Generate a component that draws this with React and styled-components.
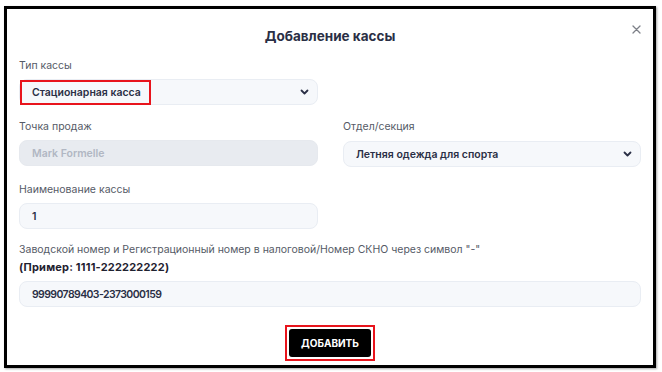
import React from 'react'
import styled, { createGlobalStyle } from 'styled-components'

const GlobalStyle = createGlobalStyle`
  html, body {
    margin: 0;
    padding: 0;
    background: #ffffff;
  }
  body {
    font-family: Inter, "Noto Sans", sans-serif;
  }
`

const Page = styled.div`
  width: 662px;
  height: 372px;
  padding: 6px 0 0 4px;
  box-sizing: border-box;
`

const Modal = styled.div`
  position: relative;
  width: 652px;
  height: 362px;
  box-sizing: border-box;
  border: 3px solid #000;
  box-shadow: 1px 1px 2px rgba(0, 0, 0, 0.35);
  background: #fff;
  padding: 0 12px;
  display: flex;
  flex-direction: column;
`

const Title = styled.h2`
  margin: 19px 0 0;
  height: 16px;
  line-height: 16px;
  text-align: center;
  font-size: 13.5px;
  font-weight: 700;
  color: #2a2f45;
`

const CloseButton = styled.button`
  position: absolute;
  top: 13px;
  right: 10px;
  width: 14px;
  height: 14px;
  padding: 0;
  border: none;
  background: transparent;
  display: flex;
  align-items: center;
  justify-content: center;
  cursor: pointer;
`

const Row = styled.div`
  display: grid;
  grid-template-columns: 299px 298px;
  column-gap: 25px;
  margin-top: ${p => p.$gap}px;
`

const Field = styled.div`
  display: flex;
  flex-direction: column;
  ${p => p.$wide && 'grid-column: 1 / span 2;'}
`

const Label = styled.label`
  font-size: 10.5px;
  line-height: 14px;
  padding-top: 1px;
  color: #555a66;
  margin-bottom: ${p => (p.$tight ? 3 : 6)}px;
  white-space: nowrap;
`

const Hint = styled.div`
  font-size: 11px;
  font-weight: 700;
  line-height: 14px;
  letter-spacing: 0.2px;
  color: #1f2230;
  margin-bottom: 7px;
`

const Control = styled.div`
  height: 26px;
  box-sizing: border-box;
  border: 1px solid ${p => (p.$disabled ? '#e6e9ee' : '#e9edf3')};
  background: ${p => (p.$disabled ? '#e8ebf0' : '#f6f8fb')};
  border-radius: 8px;
  display: flex;
  align-items: center;
  padding: 0 12px;
  font-size: 10.5px;
  font-weight: 600;
  white-space: nowrap;
  letter-spacing: ${p => (p.$numeric ? '-0.6px' : '0')};
  color: ${p => (p.$disabled ? '#b1b7c3' : '#2a2f45')};
  margin-top: ${p => p.$shift || 0}px;
`

const SelectBox = styled(Control)`
  justify-content: space-between;
  padding: 0 8px 0 12px;
`

const MarkedValue = styled.span`
  margin-left: -12px;
  height: 25px;
  width: 131px;
  box-sizing: border-box;
  border: 2px solid #e8141c;
  padding: 0 10px;
  display: flex;
  align-items: center;
`

const Footer = styled.div`
  display: flex;
  justify-content: center;
  margin-top: 18px;
`

const Marker = styled.div`
  border: 2px solid #e8141c;
  padding: 2px;
  display: flex;
`

const SubmitButton = styled.button`
  width: 82px;
  height: 28px;
  border: none;
  border-radius: 3px;
  background: #000;
  color: #fff;
  font-family: Inter, "Noto Sans", sans-serif;
  font-size: 10px;
  font-weight: 700;
  cursor: pointer;
`

const Chevron = () => (
  <svg width="9" height="6" viewBox="0 0 9 6">
    <polyline points="1.5,1.5 4.5,4.5 7.5,1.5" fill="none" stroke="#2a2f45" strokeWidth="1.8" strokeLinecap="round" strokeLinejoin="round" />
  </svg>
)

const CloseIcon = () => (
  <svg width="9" height="9" viewBox="0 0 9 9">
    <path d="M1 1L8 8M8 1L1 8" stroke="#7d8088" strokeWidth="1.3" strokeLinecap="round" />
  </svg>
)

const App = () => (
  <Page>
    <GlobalStyle />
    <Modal>
      <Title>Добавление кассы</Title>
      <CloseButton aria-label="close">
        <CloseIcon />
      </CloseButton>

      <Row $gap={14}>
        <Field>
          <Label>Тип кассы</Label>
          <SelectBox>
            <MarkedValue>Стационарная касса</MarkedValue>
            <Chevron />
          </SelectBox>
        </Field>
      </Row>

      <Row $gap={14}>
        <Field>
          <Label>Точка продаж</Label>
          <Control $disabled>Mark Formelle</Control>
        </Field>
        <Field>
          <Label>Отдел/секция</Label>
          <SelectBox $shift={1}>
            <span>Летняя одежда для спорта</span>
            <Chevron />
          </SelectBox>
        </Field>
      </Row>

      <Row $gap={15}>
        <Field>
          <Label>Наименование кассы</Label>
          <Control>1</Control>
        </Field>
      </Row>

      <Row $gap={13}>
        <Field $wide>
          <Label $tight>Заводской номер и Регистрационный номер в налоговой/Номер СКНО через символ "-"</Label>
          <Hint>(Пример: 1111-222222222)</Hint>
          <Control $numeric>99990789403-2373000159</Control>
        </Field>
      </Row>

      <Footer>
        <Marker>
          <SubmitButton>ДОБАВИТЬ</SubmitButton>
        </Marker>
      </Footer>
    </Modal>
  </Page>
)

export default App
